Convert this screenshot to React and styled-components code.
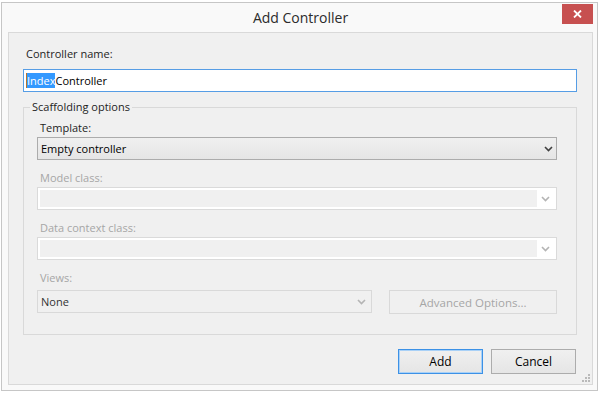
import React from 'react'
import styled, { createGlobalStyle } from 'styled-components'

const GlobalStyle = createGlobalStyle`
  html, body {
    margin: 0;
    padding: 0;
    background: #fff;
  }
  body {
    font-family: 'Open Sans', 'Liberation Sans', sans-serif;
    font-size: 11px;
    color: #1e1e1e;
  }
`

const Window = styled.div`
  box-sizing: border-box;
  width: 597px;
  height: 389px;
  margin: 2px 0 0 1px;
  border: 1px solid #c6c6c6;
  background: #f9f9f9;
  padding: 0 4px 5px 6px;
  display: flex;
  flex-direction: column;
`

const TitleBar = styled.div`
  height: 29px;
  flex-shrink: 0;
  display: grid;
  grid-template-columns: 1fr auto 1fr;
  align-items: start;
`

const Title = styled.div`
  grid-column: 2;
  line-height: 29px;
  font-size: 14px;
  color: #2b2b2b;
`

const CloseButton = styled.button`
  grid-column: 3;
  justify-self: end;
  margin-top: 1px;
  width: 31px;
  height: 20px;
  border: 0;
  padding: 0;
  background: #c75050;
  display: flex;
  align-items: center;
  justify-content: center;
`

const Panel = styled.div`
  position: relative;
  flex: 1;
  border: 1px solid #d9d9d9;
  background: #f0f0f0;
  padding: 13px 15px 0 14px;
  display: flex;
  flex-direction: column;
`

const Label = styled.div`
  line-height: 16px;
  padding-left: ${(p) => p.$indent || 0}px;
  margin-bottom: ${(p) => p.$space || 1}px;
  color: ${(p) => (p.$disabled ? '#a6a6a6' : '#1e1e1e')};
`

const TextBox = styled.div`
  box-sizing: border-box;
  height: 23px;
  border: 1px solid #569de5;
  background: #fff;
  padding-left: 2px;
  display: flex;
  align-items: center;
  font-size: 11px;
  color: #000;
`

const Caret = styled.span`
  display: inline-block;
  width: 1px;
  height: 15px;
  background: #b8732d;
`

const Selected = styled.span`
  background: #3399ff;
  color: #fff;
  line-height: 15px;
`

const Group = styled.fieldset`
  margin: 7px 0 0;
  padding: 0;
  border: 1px solid #d9d9d9;
  min-width: 0;
`

const Legend = styled.legend`
  margin-left: 6px;
  padding: 0 2px;
  line-height: 16px;
`

const Stack = styled.div`
  padding: 5px 19px 20px 13px;
  display: flex;
  flex-direction: column;
  gap: 10px;
`

const Field = styled.div`
  display: flex;
  flex-direction: column;
`

const Select = styled.div`
  box-sizing: border-box;
  height: 23px;
  border: 1px solid #acacac;
  background: linear-gradient(#f0f0f0, #e5e5e5);
  padding: 0 3px 0 3px;
  display: flex;
  align-items: center;
  justify-content: space-between;
  color: #000;
`

const EmptyCombo = styled.div`
  box-sizing: border-box;
  height: 23px;
  border: 1px solid #dadada;
  box-shadow: inset 0 0 0 2px #fff;
  background: #f0f0f0;
  padding: 2px;
  display: flex;
  justify-content: flex-end;
`

const DropArea = styled.div`
  width: 17px;
  background: #fff;
  display: flex;
  align-items: center;
  justify-content: center;
`

const Row = styled.div`
  margin-top: 3px;
  display: grid;
  grid-template-columns: 1fr 168px;
  gap: 17px;
`

const FlatSelect = styled.div`
  box-sizing: border-box;
  height: 23px;
  border: 1px solid #d9d9d9;
  background: #f0f0f0;
  padding: 0 5px 0 3px;
  display: flex;
  align-items: center;
  justify-content: space-between;
  color: #333;
`

const Button = styled.button`
  box-sizing: border-box;
  width: ${(p) => p.$width || 85}px;
  height: ${(p) => p.$height || 25}px;
  margin: 0;
  padding: 0;
  font-family: inherit;
  font-size: ${(p) => p.$size || 12}px;
  border: 1px solid ${(p) => (p.$default ? '#3c91e6' : p.$disabled ? '#d9d9d9' : '#acacac')};
  box-shadow: ${(p) => (p.$default ? 'inset 0 0 0 1px #a9d1f7' : 'none')};
  background: ${(p) => (p.$disabled ? '#f0f0f0' : 'linear-gradient(#f0f0f0, #e5e5e5)')};
  color: ${(p) => (p.$disabled ? '#a6a6a6' : '#000')};
`

const Footer = styled.div`
  margin-top: 14px;
  margin-right: 1px;
  display: flex;
  justify-content: flex-end;
  gap: 8px;
`

const Grip = styled.svg`
  position: absolute;
  right: 1px;
  bottom: 1px;
`

function Chevron({ color = '#404040' }) {
  return (
    <svg width='9' height='6' viewBox='0 0 9 6'>
      <path d='M1 1 L4.5 4.5 L8 1' fill='none' stroke={color} strokeWidth='1.6' />
    </svg>
  )
}

function Combo() {
  return (
    <EmptyCombo>
      <DropArea>
        <Chevron color='#b4b4b4' />
      </DropArea>
    </EmptyCombo>
  )
}

export default function App() {
  return (
    <>
      <GlobalStyle />
      <Window>
        <TitleBar>
          <Title>Add Controller</Title>
          <CloseButton aria-label='Close'>
            <svg width='9' height='8' viewBox='0 0 9 8'>
              <path d='M1 0.5 L8 7.5 M8 0.5 L1 7.5' stroke='#fff' strokeWidth='1.8' />
            </svg>
          </CloseButton>
        </TitleBar>
        <Panel>
          <Label $indent={3} $space={7}>Controller name:</Label>
          <TextBox>
            <Caret />
            <Selected>Index</Selected>Controller
          </TextBox>
          <Group>
            <Legend>Scaffolding options</Legend>
            <Stack>
              <Field>
                <Label $indent={3}>Template:</Label>
                <Select>
                  Empty controller
                  <Chevron />
                </Select>
              </Field>
              <Field>
                <Label $indent={3} $disabled>Model class:</Label>
                <Combo />
              </Field>
              <Field>
                <Label $indent={3} $disabled>Data context class:</Label>
                <Combo />
              </Field>
              <Field>
                <Label $indent={3} $disabled>Views:</Label>
                <Row>
                  <FlatSelect>
                    None
                    <Chevron color='#b4b4b4' />
                  </FlatSelect>
                  <Button $width={168} $height={24} $size={11.5} $disabled>Advanced Options...</Button>
                </Row>
              </Field>
            </Stack>
          </Group>
          <Footer>
            <Button $default>Add</Button>
            <Button>Cancel</Button>
          </Footer>
          <Grip width='9' height='9' viewBox='0 0 9 9'>
            <g fill='#b9b9b9'>
              <rect x='6' y='0' width='2' height='2' />
              <rect x='3' y='3' width='2' height='2' />
              <rect x='6' y='3' width='2' height='2' />
              <rect x='0' y='6' width='2' height='2' />
              <rect x='3' y='6' width='2' height='2' />
              <rect x='6' y='6' width='2' height='2' />
            </g>
          </Grip>
        </Panel>
      </Window>
    </>
  )
}
